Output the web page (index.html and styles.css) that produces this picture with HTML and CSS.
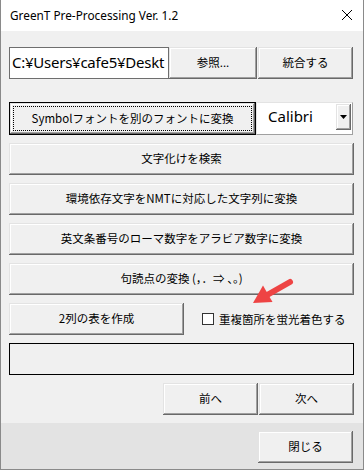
FILE: index.html
```html
<!DOCTYPE html>
<html lang="ja">
<head>
    <meta charset="UTF-8">
    <title>GreenT Pre-Processing Ver. 1.2</title>
    <link rel="stylesheet" href="styles.css">
</head>
<body>
    <div class="window">
        <div class="titlebar">
            <span class="title">GreenT Pre-Processing Ver. 1.2</span>
            <svg class="close" width="12" height="12" viewBox="0 0 12 12">
                <path d="M1 1 L11 11 M11 1 L1 11" stroke="#000" stroke-width="1" fill="none"/>
            </svg>
        </div>

        <div class="client">
            <!-- ファイル選択 -->
            <div class="row row-file">
                <div class="textbox">C:¥Users¥cafe5¥Deskt</div>
                <button class="btn w-browse">参照...</button>
                <button class="btn w-merge">統合する</button>
            </div>

            <!-- フォント変換 -->
            <div class="row row-font">
                <button class="btn btn-default w-symbol"><span class="focus">Symbolフォントを別のフォントに変換</span></button>
                <div class="combo">
                    <span class="combo-text">Calibri</span>
                    <span class="combo-btn">
                        <svg width="7" height="4" viewBox="0 0 7 4"><path d="M0 0 H7 L3.5 4 Z" fill="#000"/></svg>
                    </span>
                </div>
            </div>

            <button class="btn full">文字化けを検索</button>
            <button class="btn full">環境依存文字をNMTに対応した文字列に変換</button>
            <button class="btn full">英文条番号のローマ数字をアラビア数字に変換</button>
            <button class="btn full">句読点の変換 (，．⇒ 、。)</button>

            <div class="row row-table">
                <button class="btn w-table">2列の表を作成</button>
                <label class="check"><span class="box"></span>重複箇所を蛍光着色する</label>
            </div>

            <div class="status"></div>

            <div class="row row-nav">
                <button class="btn w-nav">前へ</button>
                <button class="btn w-nav">次へ</button>
            </div>
        </div>

        <div class="footer">
            <button class="btn w-nav">閉じる</button>
        </div>

        <!-- 注釈の矢印 -->
        <svg class="arrow" width="364" height="470" viewBox="0 0 364 470">
            <line x1="290" y1="282" x2="268" y2="294.5" stroke="#ee4444" stroke-width="6" stroke-linecap="round"/>
            <polygon points="253,303 272.5,302 263,285.5" fill="#ee4444"/>
        </svg>
    </div>
</body>
</html>
```

FILE: styles.css
```css
/* 基本スタイル */
html, body {
    margin: 0;
    padding: 0;
    background: #fff;
}

body {
    font-family: "Noto Sans CJK JP", "Noto Sans", sans-serif;
    font-size: 11.5px;
    color: #000;
}

.window {
    position: relative;
    width: 364px;
    height: 470px;
    box-sizing: border-box;
    border: 1px solid #8a8a8a;
    border-top: none;
    display: flex;
    flex-direction: column;
    overflow: hidden;
}

/* タイトルバー */
.titlebar {
    height: 31px;
    flex: none;
    background: #fff;
    display: flex;
    align-items: center;
    justify-content: space-between;
    padding: 0 10px 0 9px;
}

.title {
    font-family: "Noto Sans", sans-serif;
    font-size: 11.8px;
    color: #000;
    padding-bottom: 2px;
}

.close {
    display: block;
    margin-bottom: 1px;
}

/* クライアント領域 */
.client {
    background: #f0f0f0;
    padding: 16px 9px 8px 8px;
    display: flex;
    flex-direction: column;
}

.row {
    display: flex;
    align-items: stretch;
}

.row-file {
    height: 32px;
}

.row-font {
    height: 33px;
    margin-top: 23px;
}

.row-table,
.row-nav {
    height: 32px;
    margin-top: 8px;
}

.row-nav {
    justify-content: flex-end;
    gap: 1px;
}

/* ボタン */
.btn {
    font-family: inherit;
    font-size: inherit;
    color: #000;
    background: #f0f0f0;
    border: none;
    margin: 0;
    padding: 0 0 2px 0;
    box-sizing: border-box;
    box-shadow: inset -1px -1px #696969, inset 1px 1px #e3e3e3, inset -2px -2px #a0a0a0, inset 2px 2px #fff;
    display: flex;
    align-items: center;
    justify-content: center;
}

.btn.full {
    height: 32px;
    margin-top: 8px;
    width: 100%;
}

.btn-default {
    border: 1px solid #000;
    padding: 3px;
}

.btn-default .focus {
    flex: 1;
    align-self: stretch;
    display: flex;
    align-items: center;
    justify-content: center;
    border: 1px dotted #000;
    padding-bottom: 2px;
}

.w-browse { width: 88px; }
.w-merge { width: 95px; margin-left: 1px; }
.w-symbol { width: 247px; }
.w-table { width: 175px; }
.w-nav { width: 95px; height: 32px; }

/* テキストボックス */
.textbox {
    width: 160px;
    box-sizing: border-box;
    background: #fff;
    border: 1px solid #6e6e6e;
    font-family: "Noto Sans", sans-serif;
    font-size: 15px;
    letter-spacing: -0.25px;
    line-height: 28px;
    padding-left: 2px;
    white-space: nowrap;
    overflow: hidden;
}

/* コンボボックス */
.combo {
    width: 97px;
    box-sizing: border-box;
    background: #fff;
    display: flex;
    border: 1px solid #e3e3e3;
    border-right-color: #a0a0a0;
    border-bottom-color: #a0a0a0;
}

.combo-text {
    flex: 1;
    font-family: "Noto Sans", sans-serif;
    font-size: 15px;
    line-height: 26px;
    padding-left: 11px;
}

.combo-btn {
    width: 15px;
    margin: 1px 1px 4px 0;
    background: #f0f0f0;
    box-shadow: inset -1px -1px #696969, inset 1px 1px #e3e3e3, inset -2px -2px #a0a0a0, inset 2px 2px #fff;
    display: flex;
    align-items: center;
    justify-content: center;
}

/* チェックボックス */
.check {
    display: flex;
    align-items: center;
    margin-left: 18px;
    padding-bottom: 1px;
}

.box {
    width: 12px;
    height: 12px;
    box-sizing: border-box;
    background: #fff;
    border: 1px solid #333;
    margin-right: 5px;
}

/* 状態表示 */
.status {
    height: 32px;
    margin-top: 8px;
    box-sizing: border-box;
    border: 1px solid #000;
}

/* 下部 */
.footer {
    flex: 1;
    background: #e3e3e3;
    display: flex;
    justify-content: flex-end;
    align-items: flex-start;
    padding: 8px 10px 0 0;
}

.arrow {
    position: absolute;
    left: -1px;
    top: 0;
    pointer-events: none;
}
```
